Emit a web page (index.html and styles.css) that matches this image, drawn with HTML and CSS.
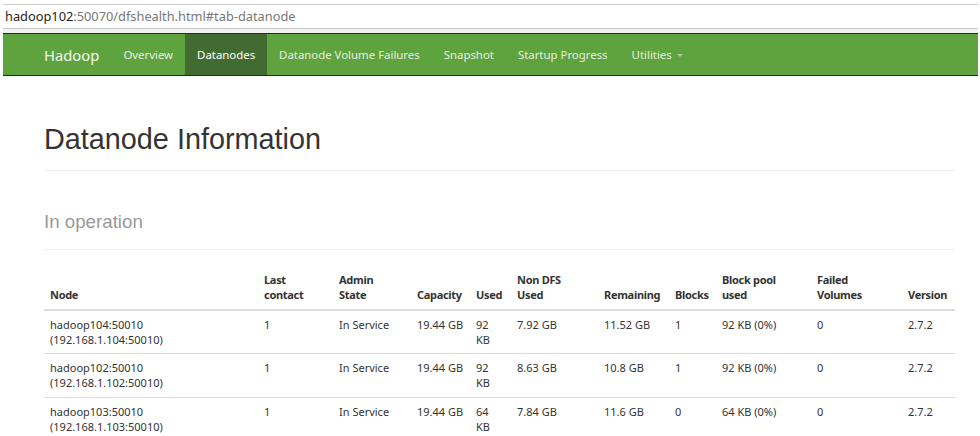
FILE: index.html
```html
<!DOCTYPE html>
<html>
<head>
<meta charset="utf-8">
<link rel="stylesheet" href="styles.css">
</head>
<body>
<div class="addr"><span class="host">hadoop102</span><span class="rest">:50070/dfshealth.html#tab-datanode</span></div>
<div class="band"></div>
<nav class="navbar">
  <a class="brand">Hadoop</a>
  <a class="item">Overview</a>
  <a class="item active">Datanodes</a>
  <a class="item">Datanode Volume Failures</a>
  <a class="item">Snapshot</a>
  <a class="item">Startup Progress</a>
  <a class="item">Utilities <span class="caret"></span></a>
</nav>
<div class="container">
  <div class="page-header first"><h1>Datanode Information</h1></div>
  <div class="page-header second"><h1><small>In operation</small></h1></div>
  <table class="table">
    <colgroup>
      <col class="c-node"><col class="c-last"><col class="c-admin"><col class="c-cap"><col class="c-used"><col class="c-nondfs"><col class="c-rem"><col class="c-blocks"><col class="c-bp"><col class="c-failed"><col class="c-ver">
    </colgroup>
    <thead>
      <tr>
        <th>Node</th><th>Last<br>contact</th><th>Admin<br>State</th><th>Capacity</th><th>Used</th><th>Non DFS<br>Used</th><th>Remaining</th><th>Blocks</th><th>Block pool<br>used</th><th>Failed<br>Volumes</th><th>Version</th>
      </tr>
    </thead>
    <tbody>
      <tr>
        <td>hadoop104:50010<br>(192.168.1.104:50010)</td><td>1</td><td>In Service</td><td>19.44 GB</td><td>92<br>KB</td><td>7.92 GB</td><td>11.52 GB</td><td>1</td><td>92 KB (0%)</td><td>0</td><td>2.7.2</td>
      </tr>
      <tr>
        <td>hadoop102:50010<br>(192.168.1.102:50010)</td><td>1</td><td>In Service</td><td>19.44 GB</td><td>92<br>KB</td><td>8.63 GB</td><td>10.8 GB</td><td>1</td><td>92 KB (0%)</td><td>0</td><td>2.7.2</td>
      </tr>
      <tr>
        <td>hadoop103:50010<br>(192.168.1.103:50010)</td><td>1</td><td>In Service</td><td>19.44 GB</td><td>64<br>KB</td><td>7.84 GB</td><td>11.6 GB</td><td>0</td><td>64 KB (0%)</td><td>0</td><td>2.7.2</td>
      </tr>
    </tbody>
  </table>
</div>
</body>
</html>
```
FILE: styles.css
```css
html, body {
  margin: 0;
  padding: 0;
  background: #fff;
  overflow: hidden;
}
body {
  font-family: "Noto Sans", "Open Sans", sans-serif;
  color: #333;
}
.addr {
  margin: 4px 2px 0 3px;
  border-top: 1px solid #cbcbcb;
  border-bottom: 1px solid #c9c9c9;
  height: 23px;
  box-sizing: content-box;
  padding-left: 2px;
  font-size: 12.8px;
  line-height: 22px;
  white-space: nowrap;
}
.host { color: #1e1e1e; }
.rest { color: #777; }
.band {
  margin: 0 2px 0 3px;
  height: 4px;
  background: #f2f2f2;
}
.navbar {
  margin: 0 2px 0 3px;
  display: flex;
  align-items: stretch;
  height: 41px;
  background: #5fa33e;
  border-top: 1px solid #2a2a2a;
  border-bottom: 1px solid #1d2e14;
  padding-left: 29px;
}
.navbar a {
  display: flex;
  align-items: center;
  padding: 0 12px;
  color: #e6efe0;
  font-size: 11.4px;
  white-space: nowrap;
}
.navbar .brand {
  font-size: 14.8px;
  color: #f4f8f2;
}
.navbar .active {
  background: #426b31;
  color: #fff;
}
.caret {
  display: inline-block;
  width: 0;
  height: 0;
  margin-left: 5px;
  margin-top: 2px;
  border-top: 3px solid #a8c996;
  border-left: 3px solid transparent;
  border-right: 3px solid transparent;
}
.container {
  margin-left: 44px;
  width: 911px;
}
.page-header {
  padding-bottom: 15px;
  border-bottom: 1px solid #eee;
}
.page-header.first { margin-top: 47px; }
.page-header.second { margin-top: 31px; }
.page-header h1 {
  margin: 0;
  font-family: "Liberation Sans", Arial, sans-serif;
  font-weight: normal;
  font-size: 28.8px;
  line-height: 32px;
  color: #333;
}
.page-header h1 small {
  font-size: 18.72px;
  line-height: 1;
  color: #999;
}
.table {
  margin-top: 16px;
  width: 911px;
  table-layout: fixed;
  border-collapse: collapse;
  font-size: 11px;
  line-height: 15px;
  color: #333;
}
.c-node { width: 214px; }
.c-last { width: 75px; }
.c-admin { width: 78px; }
.c-cap { width: 59px; }
.c-used { width: 41px; }
.c-nondfs { width: 87px; }
.c-rem { width: 71px; }
.c-blocks { width: 47px; }
.c-bp { width: 95px; }
.c-failed { width: 91px; }
.c-ver { width: 53px; }
.table th, .table td {
  padding: 6.2px 6px;
  text-align: left;
  white-space: nowrap;
}
.table th {
  padding-top: 6.4px;
  padding-bottom: 6.4px;
  vertical-align: bottom;
  font-weight: bold;
  letter-spacing: -0.3px;
  border-bottom: 2px solid #ddd;
}
.table td {
  vertical-align: top;
  border-top: 1px solid #ddd;
}
```
